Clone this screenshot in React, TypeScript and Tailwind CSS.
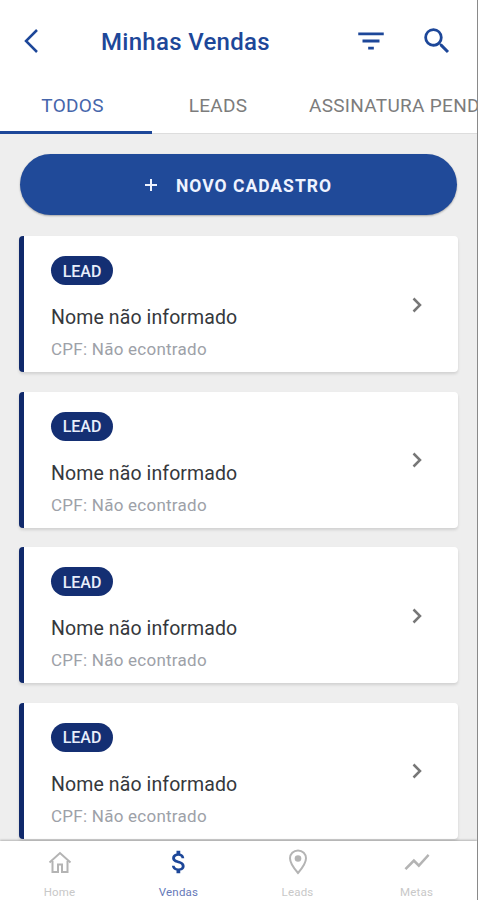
import React from 'react';
import { MdAttachMoney, MdFilterList, MdSearch, MdShowChart } from 'react-icons/md';

const CARDS = [1, 2, 3, 4];

const HomeIcon: React.FC = () => (
    <svg viewBox="0 0 24 24" className="size-6" fill="none" stroke="currentColor" strokeWidth="2">
        <path d="M1.500 12.500L12 3l10.500 9.500" />
        <path d="M4.500 11v11H10v-7.500h4V22h5.500V11" />
    </svg>
);

const PinIcon: React.FC = () => (
    <svg viewBox="0 0 20 26" className="h-[26px] w-5" fill="none">
        <path d="M10 1.500c-4.600 0-8 3.400-8 7.800C2 15 10 24 10 24s8-9 8-14.700c0-4.400-3.400-7.800-8-7.800z" stroke="currentColor" strokeWidth="2" />
        <circle cx="10" cy="9.500" r="3.300" fill="currentColor" />
    </svg>
);

const NAV_ITEMS = [
    { label: 'Home', icon: <HomeIcon />, active: false },
    { label: 'Vendas', icon: <MdAttachMoney className="size-[30px]" />, active: true },
    { label: 'Leads', icon: <PinIcon />, active: false },
    { label: 'Metas', icon: <MdShowChart className="size-[30px]" />, active: false },
];

const Header: React.FC = () => (
    <header className="flex h-[82px] shrink-0 items-center pl-6 pr-[23px] text-[#1d4799]">
        <button aria-label="Voltar">
            <svg viewBox="0 0 14 24" className="h-6 w-3.5" fill="none" stroke="currentColor" strokeWidth="2.500">
                <path d="M13 1L2 12l11 11" />
            </svg>
        </button>
        <h1 className="ml-[63px] whitespace-nowrap pt-0.5 text-2xl font-medium tracking-[0.300px]">Minhas Vendas</h1>
        <button aria-label="Filtrar" className="ml-auto">
            <MdFilterList className="size-[34px]" />
        </button>
        <button aria-label="Buscar" className="ml-8">
            <MdSearch className="size-[34px]" />
        </button>
    </header>
);

const Tabs: React.FC = () => (
    <nav className="z-10 flex h-[52px] shrink-0 whitespace-nowrap bg-white text-[19px] tracking-[0.300px] text-[#7c7c7c]">
        <button className="w-[152px] shrink-0 border-b-[3px] border-[#1d4799] pr-[7px] text-[#4666ab]">TODOS</button>
        <div className="flex flex-1 border-b border-[#ddd]">
            <button className="w-[132px] shrink-0 pb-0.5">LEADS</button>
            <button className="shrink-0 pb-0.5 pl-[25px]">ASSINATURA PEND</button>
        </div>
    </nav>
);

const LeadCard: React.FC = () => (
    <article className="flex h-[136px] shrink-0 items-center justify-between rounded-[4px] border-l-[5px] border-[#10296b] bg-white pl-[27px] pr-9 shadow-[0_2px_3px_rgba(0,0,0,0.12)]">
        <div className="flex h-full flex-col items-start pt-5">
            <span className="flex h-[29px] w-[62px] items-center justify-center rounded-full bg-[#142f73] pt-0.5 text-base font-medium text-[#e8eefb]">LEAD</span>
            <h2 className="mt-[19px] text-[19.500px] leading-7 tracking-[0.100px] text-[#35383c]">Nome não informado</h2>
            <p className="mt-[3px] text-[17px] leading-7 tracking-[0.250px] text-[#9da1a8]">CPF: Não econtrado</p>
        </div>
        <svg viewBox="0 0 10 16" className="mt-px h-4 w-2.5" fill="none" stroke="#777" strokeWidth="2.500">
            <path d="M1.500 1.500L8 8l-6.500 6.500" />
        </svg>
    </article>
);

const BottomNav: React.FC = () => (
    <nav className="z-10 flex h-[59px] shrink-0 bg-white pr-px shadow-[0_-1px_2px_rgba(0,0,0,0.25)]">
        {NAV_ITEMS.map((item) => (
            <button
                key={item.label}
                className={`flex flex-1 flex-col items-center ${item.active ? 'text-[#1d4799]' : 'text-[#b4b4b4]'}`}
            >
                <span className="flex h-11 items-center justify-center">{item.icon}</span>
                <span className={`pt-px text-[11.500px] leading-4 tracking-[0.200px] ${item.active ? 'text-[#6579b9]' : 'text-[#c8c8c8]'}`}>{item.label}</span>
            </button>
        ))}
    </nav>
);

const App: React.FC = () => {
    return (
        <div className="flex h-[900px] w-[478px] flex-col overflow-hidden border-r border-[#8a8a8a] bg-white font-['Roboto',sans-serif]">
            <Header />
            <Tabs />
            <main className="flex min-h-0 flex-1 flex-col overflow-hidden bg-[#eee] pl-[19px] pr-[19px] pt-5">
                <button className="mx-px mb-[21px] flex h-[61px] shrink-0 items-center justify-center rounded-full bg-[#204a99] text-[17.500px] font-bold text-[#eef3ff] shadow-[0_1px_2px_rgba(0,0,0,0.3)]">
                    <svg viewBox="0 0 12 12" className="mr-[19px] size-3" stroke="currentColor" strokeWidth="2">
                        <path d="M6 0v12M0 6h12" />
                    </svg>
                    <span className="pt-[3px] tracking-[1px]">NOVO CADASTRO</span>
                </button>
                <div className="flex flex-col gap-[19.600px]">
                    {CARDS.map((id) => (
                        <LeadCard key={id} />
                    ))}
                </div>
            </main>
            <BottomNav />
        </div>
    );
};

export default App;
